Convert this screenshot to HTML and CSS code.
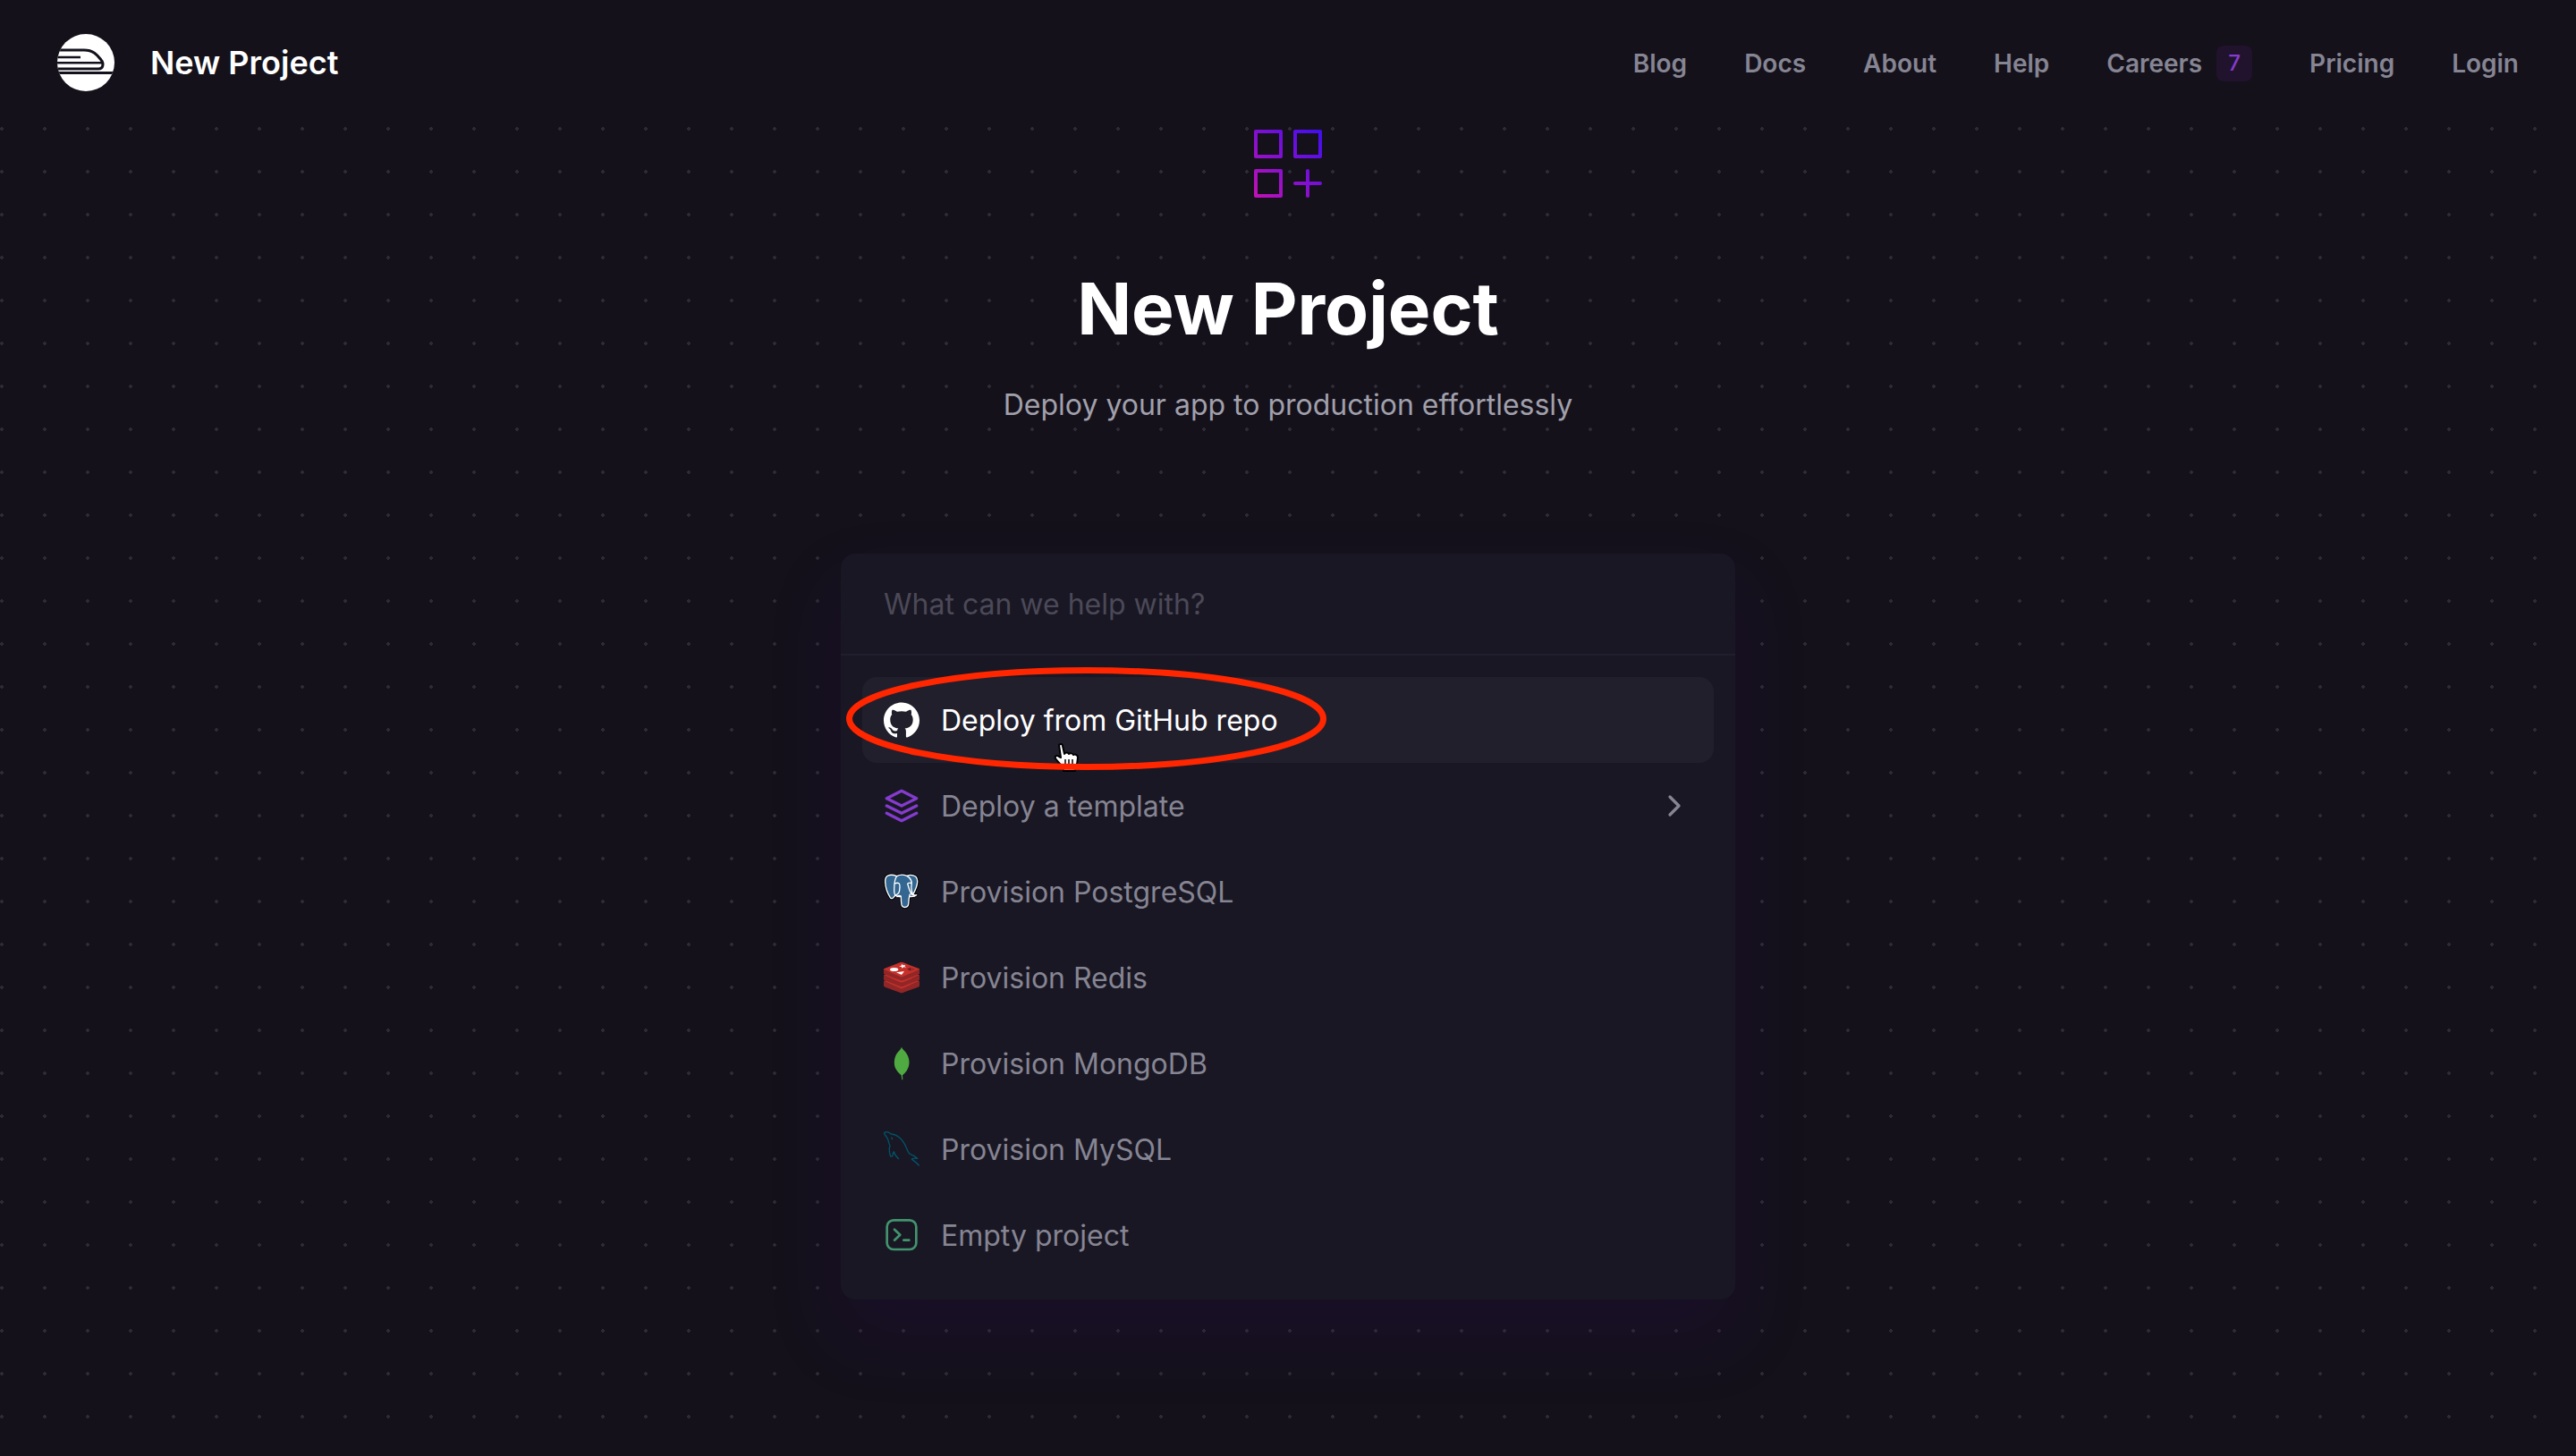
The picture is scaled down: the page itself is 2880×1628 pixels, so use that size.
FILE: index.html
```
<!DOCTYPE html>
<html lang="en">
<head>
	<meta charset="UTF-8">
	<title>New Project</title>
	<link rel="stylesheet" href="styles.css">
</head>
<body>
	<header class="header">
		<a href="#" class="brand">
			<svg class="logo" viewBox="0 0 64 64" aria-hidden="true">
				<defs>
					<clipPath id="disc"><circle cx="32" cy="32" r="32"/></clipPath>
				</defs>
				<circle cx="32" cy="32" r="32" fill="#fff"/>
				<g clip-path="url(#disc)" fill="none" stroke="#13111c">
					<path stroke-width="3" d="M0 18h30c11 0 15 6 19 11 3 3 3 10-3 10H0"/>
					<path stroke-width="2.6" d="M0 26h26M0 32.300h50"/>
					<path stroke-width="3" d="M0 43.500h64"/>
				</g>
			</svg>
			<span>New Project</span>
		</a>
		<nav class="nav">
			<a href="#">Blog</a>
			<a href="#">Docs</a>
			<a href="#">About</a>
			<a href="#">Help</a>
			<a href="#" class="careers">Careers <span class="badge">7</span></a>
			<a href="#">Pricing</a>
			<a href="#">Login</a>
		</nav>
	</header>
	<main class="main">
		<svg class="hero-icon" viewBox="0 0 76 76" aria-hidden="true">
			<defs>
				<linearGradient id="hero" gradientUnits="userSpaceOnUse" x1="0" y1="76" x2="76" y2="0">
					<stop offset="0" stop-color="#c211b4"/>
					<stop offset="1" stop-color="#3f0ef0"/>
				</linearGradient>
			</defs>
			<g fill="none" stroke="url(#hero)" stroke-width="4" stroke-linecap="round" stroke-linejoin="round">
				<path d="M2 2h28v28H2zM46 2h28v28H46zM2 46h28v28H2zM46 60h28M60 46v28"/>
			</g>
		</svg>
		<h1>New Project</h1>
		<p class="subtitle">Deploy your app to production effortlessly</p>
		<div class="palette">
			<input type="text" class="search" placeholder="What can we help with?" aria-label="What can we help with?">
			<ul class="options">
				<li class="active">
					<button type="button">
						<svg class="icon" viewBox="0 0 24 24" fill="#fff" aria-hidden="true"><path d="M12 .297c-6.630 0-12 5.373-12 12 0 5.303 3.438 9.800 8.205 11.385.6.113.82-.258.82-.577 0-.285-.010-1.040-.015-2.040-3.338.724-4.042-1.610-4.042-1.610C4.422 18.070 3.633 17.700 3.633 17.700c-1.087-.744.084-.729.084-.729 1.205.084 1.838 1.236 1.838 1.236 1.070 1.835 2.809 1.305 3.495.998.108-.776.417-1.305.76-1.605-2.665-.3-5.466-1.332-5.466-5.930 0-1.310.465-2.380 1.235-3.220-.135-.303-.54-1.523.105-3.176 0 0 1.005-.322 3.300 1.230.96-.267 1.980-.399 3-.405 1.020.006 2.040.138 3 .405 2.280-1.552 3.285-1.230 3.285-1.230.645 1.653.24 2.873.12 3.176.765.84 1.230 1.910 1.230 3.220 0 4.610-2.805 5.625-5.475 5.920.42.36.81 1.096.81 2.220 0 1.606-.015 2.896-.015 3.286 0 .315.21.69.825.57C20.565 22.092 24 17.592 24 12.297c0-6.627-5.373-12-12-12"/></svg>
						<span>Deploy from GitHub repo</span>
					</button>
					<svg class="cursor" viewBox="0 0 30 34" aria-hidden="true">
						<path fill="#fff" stroke="#000" stroke-width="2" stroke-linejoin="round" d="M6 3c2-2 4-1 4 1l2 9c1-2 4-2 5 0 1-1 4-1 5 1 2-1 5 0 5 3 0 6-1 8-3 12v3H11v-3c-3-4-6-7-9-11-1-3 2-4 4-2l2 1z"/>
						<path fill="none" stroke="#000" stroke-width="1.500" d="M13 19v8M17 19v8M21 19v8"/>
					</svg>
					<svg class="ring" viewBox="0 0 537 115" aria-hidden="true">
						<ellipse cx="268.500" cy="57.500" rx="265" ry="54" fill="none" stroke="#ff2600" stroke-width="7"/>
					</svg>
				</li>
				<li>
					<button type="button">
						<svg class="icon" viewBox="0 0 24 24" fill="none" stroke="#853bce" stroke-width="2" stroke-linecap="round" stroke-linejoin="round" aria-hidden="true"><path d="M12 2L2 7l10 5 10-5zM2 12l10 5 10-5M2 17l10 5 10-5"/></svg>
						<span>Deploy a template</span>
						<svg class="icon chevron" viewBox="0 0 24 24" fill="none" stroke="#868593" stroke-width="2" stroke-linecap="round" stroke-linejoin="round" aria-hidden="true"><path d="M9 18l6-6-6-6"/></svg>
					</button>
				</li>
				<li>
					<button type="button">
						<svg class="icon" viewBox="0 0 120 120" stroke-linecap="round" stroke-linejoin="round" aria-hidden="true">
							<path fill="#336791" stroke="#000" stroke-width="10" d="M44 8C22-1 3 4 5 28c1 20 9 40 17 52 3 5 8 3 11-1l6-7c5 5 10 6 19 4 0 10 0 19 2 28 3 12 21 11 23-2 1-8 1-18 3-26 9 1 19 0 24-5-4 1-8 1-12-1C110 48 120 22 107 9 97 3 87 3 78 7 66 2 54 2 44 8z"/>
							<path fill="#336791" stroke="#fff" stroke-width="4" d="M44 8C22-1 3 4 5 28c1 20 9 40 17 52 3 5 8 3 11-1l6-7c5 5 10 6 19 4 0 10 0 19 2 28 3 12 21 11 23-2 1-8 1-18 3-26 9 1 19 0 24-5-4 1-8 1-12-1C110 48 120 22 107 9 97 3 87 3 78 7 66 2 54 2 44 8z"/>
							<path fill="none" stroke="#fff" stroke-width="4" d="M44 8C34 20 36 40 35 56c0 8 1 12 4 16M39 72c8-3 14-8 14-18 1-10 3-18-2-22-4-2-10-1-14 1M58 76c-4-4-9-3-13 1M78 7c14 8 17 22 15 34-1 10 0 18 5 30M93 32c-5-2-11-2-13 2 4 10 5 22 12 32 2 4 4 5 6 5M86 76c0-5 2-8 6-9"/>
						</svg>
						<span>Provision PostgreSQL</span>
					</button>
				</li>
				<li>
					<button type="button">
						<svg class="icon" viewBox="0 0 120 120" aria-hidden="true">
							<path fill="#912626" d="M0 72l60 24 60-24v16c0 2-2 3-4 4L66 110c-4 2-8 2-12 0L4 92c-2-1-4-2-4-4z"/>
							<path fill="#c6302b" d="M0 72l60-22 60 22-54 23c-4 2-8 2-12 0z"/>
							<path fill="#912626" d="M0 52l60 24 60-24v16L66 89c-4 2-8 2-12 0L0 68z"/>
							<path fill="#c6302b" d="M0 52l60-22 60 22-54 23c-4 2-8 2-12 0z"/>
							<path fill="#912626" d="M0 32l60 24 60-24v16L66 69c-4 2-8 2-12 0L0 48z"/>
							<path fill="#c6302b" d="M2 30L54 10c4-2 8-2 12 0l52 20c3 1 3 3 0 4L66 56c-4 2-8 2-12 0L2 34c-3-1-3-3 0-4z"/>
							<ellipse cx="35" cy="33" rx="14" ry="6" fill="#fff"/>
							<path fill="#fff" d="M61 15l4 4 8-1-3 4 5 4-8-1-6 4-1-5-9-2 8-2zM42 43l27-4-9 12z"/>
							<path fill="#621b1c" d="M78 32l13-6v12z"/>
							<path fill="#9a2928" d="M91 26l15 6-15 6z"/>
						</svg>
						<span>Provision Redis</span>
					</button>
				</li>
				<li>
					<button type="button">
						<svg class="icon" viewBox="0 0 120 120" fill="#4faa41" aria-hidden="true"><path d="M60 5c3 8 8 10 13 17 15 19 17 44 4 63-4 6-9 11-14 15l1 15h-3l-2-15c-8-6-15-14-20-24-6-16-4-35 5-49C50 18 57 14 60 5z"/></svg>
						<span>Provision MongoDB</span>
					</button>
				</li>
				<li>
					<button type="button">
						<svg class="icon" viewBox="0 0 120 120" fill="none" stroke="#00546b" stroke-width="4" stroke-linecap="round" stroke-linejoin="round" aria-hidden="true"><path d="M50 92C42 85 36 78 34 68c-3 4-4 8-4 12 0 6-6 6-8 1-4-9-3-17-3-25 0-4 3-5 2-9-5-6-4-13-7-20C11 18 1 12 2 5c3-5 11-3 16-1 4 2 4 5 8 5 25 3 40 22 50 46 4 9 5 17 12 21 9 3 18 8 25 15-7-1-14-1-19 2 6 6 15 10 24 21M26 21c2 1 3 2 2 5"/></svg>
						<span>Provision MySQL</span>
					</button>
				</li>
				<li>
					<button type="button">
						<svg class="icon" viewBox="0 0 120 120" fill="none" stroke="#42946e" stroke-width="8" stroke-linecap="round" stroke-linejoin="round" aria-hidden="true"><rect x="11" y="10" width="98" height="98" rx="22"/><path d="M36 41l19 18-19 18M67 77h18"/></svg>
						<span>Empty project</span>
					</button>
				</li>
			</ul>
		</div>
	</main>
</body>
</html>
```

FILE: styles.css
```
* {
	box-sizing: border-box;
}
body {
	margin: 0;
	min-height: 100vh;
	font-family: Inter, "Liberation Sans", sans-serif;
	font-size: 32px;
	color: #868593;
	background-color: #14111b;
	background-image: radial-gradient(circle at 2px 2px, #2d2b35 2px, transparent 2px);
	background-size: 48px 48px;
	background-position: 0 -2px;
}
a {
	color: inherit;
	text-decoration: none;
}
.header {
	display: flex;
	align-items: center;
	justify-content: space-between;
	height: 140px;
	padding: 0 64px;
	background: #14111b;
}
.brand {
	display: flex;
	align-items: center;
	gap: 40px;
	font-size: 36px;
	font-weight: 600;
	color: #fff;
}
.logo {
	width: 64px;
	height: 64px;
}
.nav {
	display: flex;
	align-items: center;
	gap: 64px;
	padding-top: 2px;
	font-size: 28px;
	font-weight: 600;
}
.careers {
	display: flex;
	align-items: center;
	gap: 16px;
}
.badge {
	width: 40px;
	border-radius: 8px;
	font-size: 24px;
	font-weight: 500;
	line-height: 40px;
	text-align: center;
	color: #853bce;
	background: #21132d;
}
.main {
	display: flex;
	flex-direction: column;
	align-items: center;
	padding: 5px 64px 64px;
}
.hero-icon {
	width: 76px;
	height: 76px;
}
h1 {
	margin: 76px 0 36px;
	font-size: 80px;
	font-weight: 700;
	line-height: 96px;
	color: #fff;
}
.subtitle {
	margin: 0 0 142px;
	line-height: 48px;
	color: #a1a0ab;
}
.palette {
	width: 100%;
	max-width: 1000px;
	border-radius: 16px;
	background: #191723;
	box-shadow: 0 40px 80px rgba(50, 8, 95, 0.2);
}
.search {
	display: block;
	width: 100%;
	height: 114px;
	padding: 0 48px;
	border: 0;
	border-bottom: 2px solid #211f2d;
	outline: none;
	font: inherit;
	color: #fff;
	background: transparent;
}
.search::placeholder {
	color: #4b4958;
	opacity: 1;
}
.options {
	margin: 0;
	padding: 24px;
	list-style: none;
}
.options li {
	position: relative;
}
.options button {
	display: flex;
	align-items: center;
	gap: 24px;
	width: 100%;
	height: 96px;
	padding: 0 24px;
	border: 0;
	border-radius: 16px;
	font: inherit;
	color: inherit;
	background: transparent;
	cursor: pointer;
}
.active button {
	color: #fff;
	background: #221f2d;
}
.icon {
	flex: none;
	width: 40px;
	height: 40px;
	overflow: visible;
}
.chevron {
	margin-left: auto;
}
/* pointer and red ring lie over the first option */
.cursor,
.ring {
	position: absolute;
	pointer-events: none;
}
.cursor {
	top: 73px;
	left: 214px;
	width: 30px;
	height: 34px;
}
.ring {
	top: -11px;
	left: -18px;
	width: 537px;
	height: 115px;
}
```
